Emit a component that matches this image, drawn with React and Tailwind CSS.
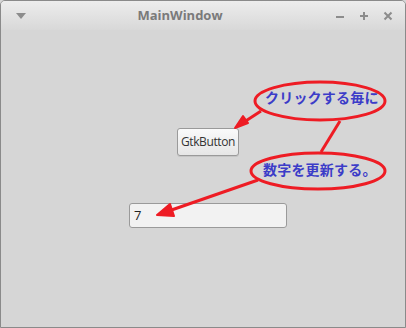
export default function App() {
  return (
    <div className="w-[406px] h-[328px] bg-[#d6d6d6]">
      <div className="relative w-[406px] h-[328px] flex flex-col border border-[#8a8a8a] rounded-t-[5px] bg-[#d6d6d6] overflow-hidden font-['Open_Sans',sans-serif]">
        {/* Title bar */}
        <div className="h-[29px] flex items-center bg-gradient-to-b from-[#ededed] to-[#d8d8d8]">
          <div className="w-[40px] flex justify-center">
            <svg width="10" height="6" viewBox="0 0 10 6">
              <polygon points="0,0 10,0 5,6" fill="#8c8c8c" />
            </svg>
          </div>
          <div className="flex-1 pl-[14px] text-[13px] font-bold text-[#7a7a7a] text-center">MainWindow</div>
          <div className="flex items-center gap-[14px] pr-[12px] pl-[30px]">
            <svg width="10" height="10" viewBox="0 0 10 10">
              <rect x="1" y="5" width="8" height="2" fill="#8c8c8c" />
            </svg>
            <svg width="10" height="10" viewBox="0 0 10 10">
              <rect x="1" y="4" width="8" height="2" fill="#8c8c8c" />
              <rect x="4" y="1" width="2" height="8" fill="#8c8c8c" />
            </svg>
            <svg width="10" height="10" viewBox="0 0 10 10">
              <path d="M1.5 1.5 L8.5 8.5 M8.5 1.5 L1.5 8.5" stroke="#8c8c8c" strokeWidth="2" />
            </svg>
          </div>
        </div>

        {/* Content */}
        <div className="flex-1 flex flex-col items-center pt-[98px]">
          <button className="ml-[10px] w-[62px] h-[28px] rounded-[3px] border border-[#9a9a9a] bg-gradient-to-b from-[#fafafa] to-[#e6e6e6] text-[12px] text-[#333] tracking-[-0.4px] shadow-[0_1px_0_rgba(0,0,0,0.08)]">
            GtkButton
          </button>
          <div className="mt-[47px] ml-[10px] w-[158px] h-[25px] rounded-[3px] border border-[#9a9a9a] bg-[#f2f2f2] flex items-center px-[4px] text-[13px] text-[#222]">
            7
          </div>
        </div>

        {/* Annotation overlay */}
        <svg className="absolute left-[-1px] top-[-1px]" width="406" height="328" viewBox="0 0 406 328">
          <g stroke="#ee1c24" fill="none" strokeWidth="3">
            <ellipse cx="320" cy="101" rx="65" ry="19" />
            <ellipse cx="318" cy="171" rx="67" ry="18" />
            <line x1="261" y1="111" x2="238" y2="126" />
            <line x1="340" y1="121" x2="321" y2="152" />
            <line x1="258" y1="180" x2="160" y2="214" />
          </g>
          <g fill="#ee1c24" stroke="#ee1c24" strokeWidth="2" strokeLinejoin="round">
            <polygon points="235,128 243,116 248,123" />
            <polygon points="157,215 170,204 174,216" />
          </g>
        </svg>
        <div className="absolute left-[264px] top-[89px] text-[14px] font-bold text-[#3c3cc8] leading-none font-['Noto_Sans_CJK_JP',sans-serif] tracking-[0.2px]">
          クリックする毎に
        </div>
        <div className="absolute left-[262px] top-[161px] text-[14px] font-bold text-[#3c3cc8] leading-none font-['Noto_Sans_CJK_JP',sans-serif] tracking-[0.2px]">
          数字を更新する。
        </div>
      </div>
    </div>
  );
}
